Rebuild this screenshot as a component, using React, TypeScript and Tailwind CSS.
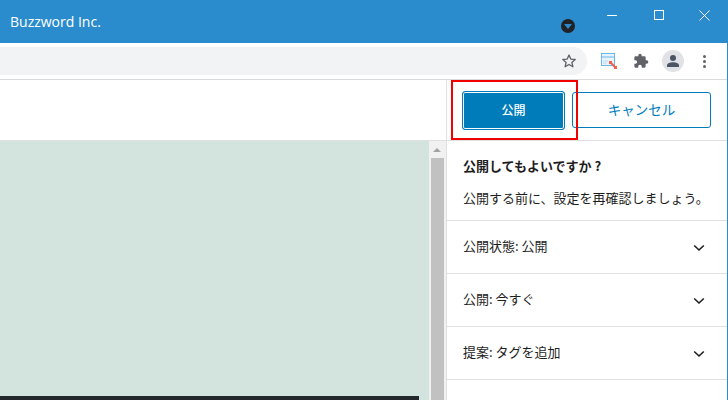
import React from "react";

const font = { jp: "font-['Noto_Sans_CJK_JP','Noto_Sans',sans-serif]" };

const Chevron = () => (
  <svg className="mt-[3px]" width="12" height="8" viewBox="0 0 12 8" fill="none" stroke="#1e1e1e" strokeWidth="1.6">
    <path d="M1.2 1.5L6 6l4.8-4.5" />
  </svg>
);

const Row = ({ label }: { label: string }) => (
  <div className="flex h-[53px] items-center justify-between border-b border-[#e0e0e0] pl-4 pr-[22px] pb-[2px]">
    <span className="text-[13px] text-[#1e1e1e]">{label}</span>
    <Chevron />
  </div>
);

const App = () => {
  return (
    <div className={`relative flex h-[400px] w-[728px] flex-col overflow-hidden border-r border-[#2b8ccd] bg-white ${font.jp}`}>
      {/* title bar */}
      <header className="relative flex h-[43px] shrink-0 items-center justify-between bg-[#2b8ccd] pl-[10px] text-white">
        <span className="font-['Open_Sans',sans-serif] text-[14px] font-medium pb-[1px]">Buzzword Inc.</span>
        <div className="flex h-full items-start">
          <div className="mr-[1px] flex h-[30px] w-[46px] items-center justify-center">
            <div className="h-px w-[10px] bg-white" />
          </div>
          <div className="mr-[1px] flex h-[30px] w-[45px] items-center justify-center">
            <div className="h-[10px] w-[10px] border border-white" />
          </div>
          <div className="flex h-[30px] w-[45px] items-center justify-center">
            <svg width="11" height="11" viewBox="0 0 11 11" stroke="white" strokeWidth="1">
              <path d="M.5.5l10 10M10.5.5l-10 10" />
            </svg>
          </div>
        </div>
        <div className="absolute left-[561px] top-[19px] flex h-[14px] w-[14px] items-center justify-center rounded-full bg-[#202124]">
          <div className="h-0 w-0 border-x-[4px] border-t-[5px] border-x-transparent border-t-[#2b8ccd]" />
        </div>
      </header>

      {/* toolbar */}
      <div className="flex h-[37px] shrink-0 items-center border-b border-[#d9dadc] bg-white">
        <div className="flex h-[28px] w-[587px] items-center justify-end rounded-r-full bg-[#f1f3f4] pr-[10px]">
          <svg width="16" height="16" viewBox="0 0 24 24" fill="none" stroke="#5f6368" strokeWidth="2" strokeLinejoin="round">
            <path d="M12 3l2.7 6.1 6.6.6-5 4.4 1.5 6.5L12 17.2l-5.8 3.4 1.5-6.5-5-4.4 6.6-.6z" />
          </svg>
        </div>
        <div className="ml-[14px] flex items-center">
          <svg width="17" height="16" viewBox="0 0 17 16">
            <rect x=".5" y=".5" width="13" height="12" fill="#e8f4fc" stroke="#6db7ea" />
            <path d="M1 4h12" stroke="#6db7ea" />
            <path d="M2 8h5M2 10h4" stroke="#bcdcf3" />
            <path d="M9 9l6 6" stroke="#f0604d" strokeWidth="2" />
            <rect x="8" y="8" width="3" height="3" fill="#f0604d" />
            <rect x="13" y="13" width="3" height="3" fill="#f0604d" />
          </svg>
          <svg className="ml-[15px]" width="16" height="16" viewBox="0 0 24 24" fill="#5f6368">
            <path d="M20.5 11H19V7a2 2 0 0 0-2-2h-4V3.5a2.5 2.5 0 0 0-5 0V5H4a2 2 0 0 0-2 2v3.8h1.5a2.7 2.7 0 0 1 0 5.4H2V20a2 2 0 0 0 2 2h3.8v-1.5a2.7 2.7 0 0 1 5.4 0V22H17a2 2 0 0 0 2-2v-4h1.5a2.5 2.5 0 0 0 0-5z" />
          </svg>
          <div className="ml-[13px] flex h-[22px] w-[22px] items-center justify-center rounded-full bg-[#e0e2e6]">
            <svg width="14" height="14" viewBox="0 0 14 14" fill="#4b5563">
              <circle cx="7" cy="4" r="3" />
              <path d="M1 13v-1.5C1 9.5 4 8.3 7 8.3s6 1.2 6 3.2V13z" />
            </svg>
          </div>
          <div className="ml-[19px] flex flex-col gap-[2px]">
            <div className="h-[3px] w-[3px] rounded-full bg-[#5f6368]" />
            <div className="h-[3px] w-[3px] rounded-full bg-[#5f6368]" />
            <div className="h-[3px] w-[3px] rounded-full bg-[#5f6368]" />
          </div>
        </div>
      </div>

      {/* publish header */}
      <div className="flex h-[61px] shrink-0 border-b border-[#e0e0e0]">
        <div className="w-[446px] shrink-0" />
        <div className="flex flex-1 items-center border-l border-[#e0e0e0] pl-[15px]">
          <button className="flex h-[39px] w-[103px] items-center justify-center rounded-[3px] border border-[#007cba] bg-[#007cba] pb-[1px] text-[12px] font-medium text-white shadow-[inset_0_0_0_1px_white]">
            公開
          </button>
          <button className="ml-[7px] flex h-[36px] w-[139px] items-center justify-center rounded-[3px] border border-[#007cba] bg-white pb-[1px] text-[13.5px] text-[#007cba]">
            キャンセル
          </button>
        </div>
      </div>

      {/* body */}
      <div className="flex min-h-0 flex-1">
        <div className="flex w-[429px] shrink-0 flex-col justify-end bg-[#d2e4dd]">
          <div className="h-[4px] w-[419px] bg-[#23282d]" />
        </div>
        <div className="flex w-[17px] shrink-0 flex-col items-center bg-[#f1f1f1] pr-[1px]">
          <div className="flex h-[17px] items-center justify-center">
            <div className="h-0 w-0 border-x-[4px] border-b-[4px] border-x-transparent border-b-[#a3a3a3]" />
          </div>
          <div className="flex-1 w-[13px] bg-[#c1c1c1]" />
        </div>
        <div className="flex-1 border-l border-[#e0e0e0]">
          <div className="h-[80px] border-b border-[#e0e0e0] pl-4 pt-[15px]">
            <p className="text-[13px] leading-[20px] font-bold text-[#1e1e1e]">公開してもよいですか ?</p>
            <p className="mt-[12px] text-[13px] leading-[20px] text-[#1e1e1e]">公開する前に、設定を再確認しましょう。</p>
          </div>
          <Row label="公開状態: 公開" />
          <Row label="公開: 今すぐ" />
          <Row label="提案: タグを追加" />
        </div>
      </div>

      {/* annotation */}
      <div className="absolute left-[451px] top-[80px] h-[60px] w-[127px] border-2 border-[#f00000]" />
    </div>
  );
};

export default App;
